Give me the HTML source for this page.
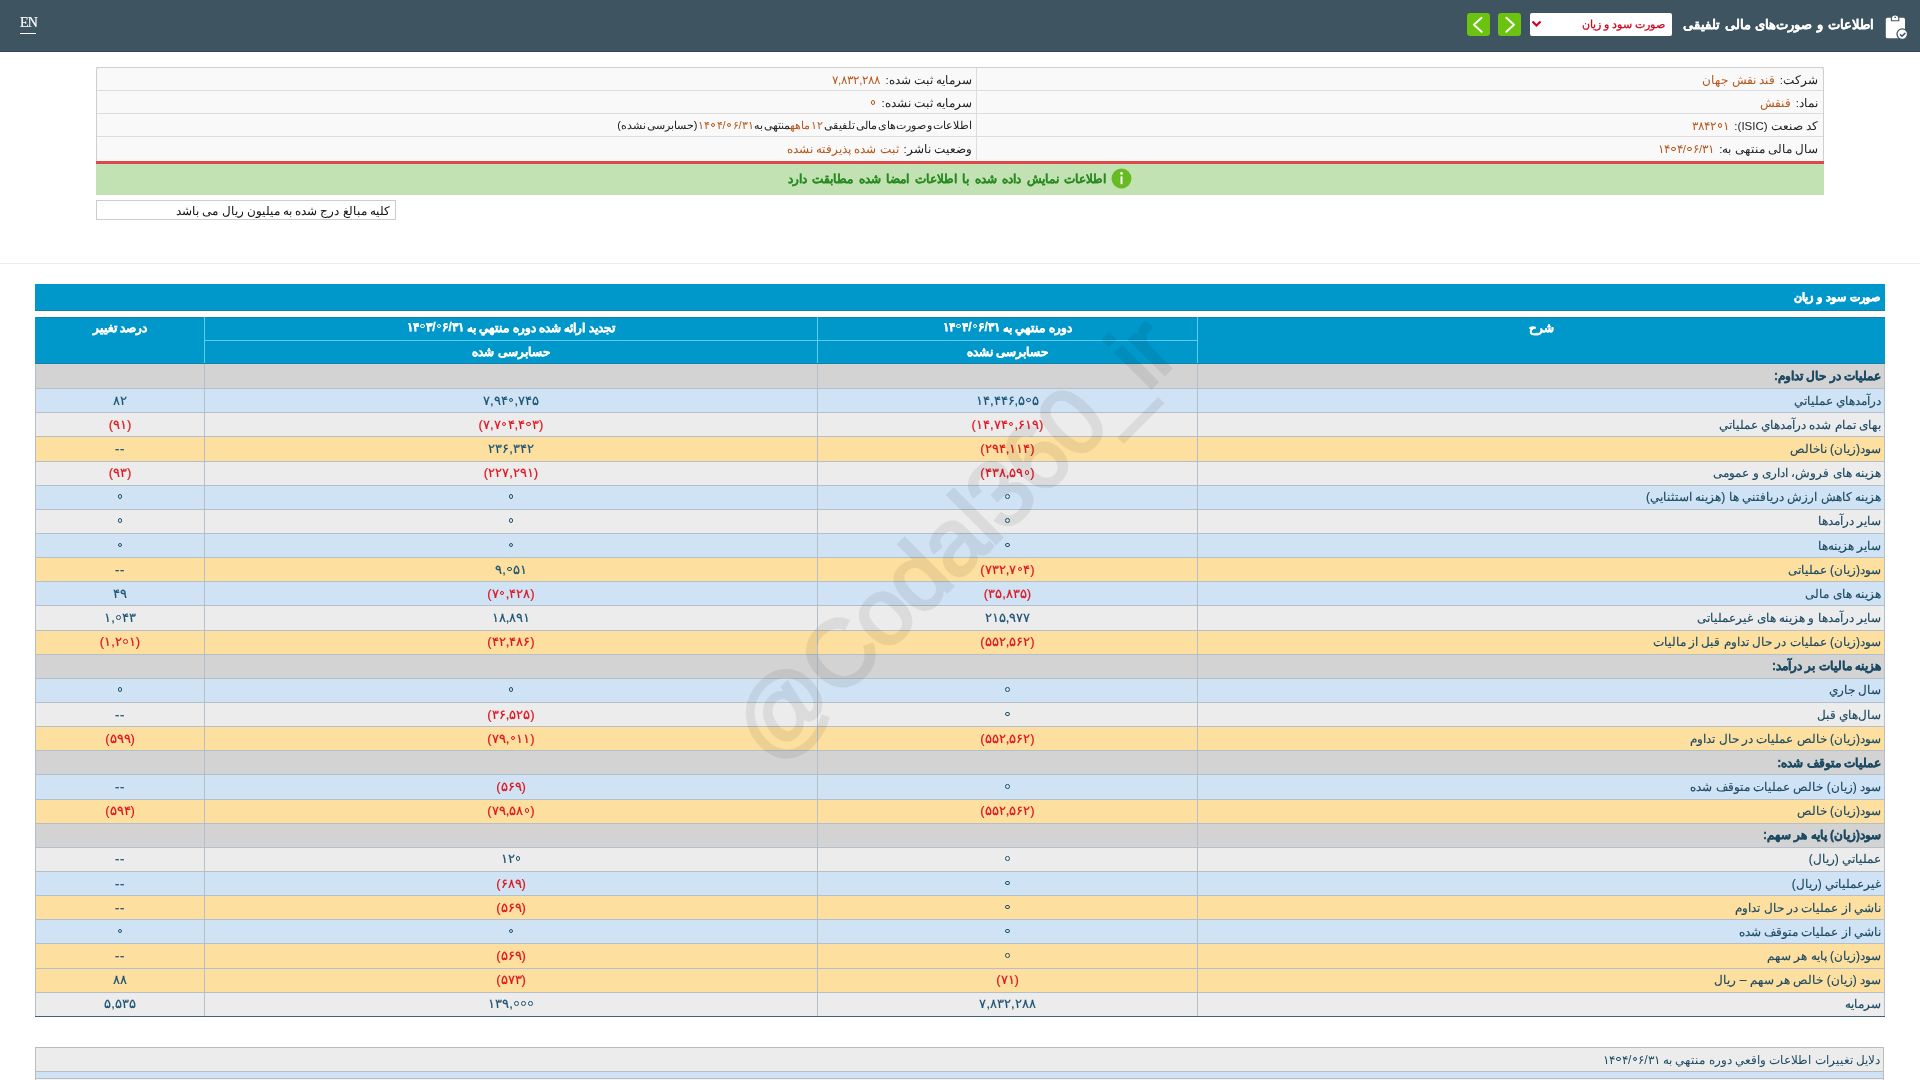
<!DOCTYPE html>
<html lang="fa" dir="rtl">
<head>
<meta charset="utf-8">
<title>Codal</title>
<style>
html,body{margin:0;padding:0;}
body{width:1920px;height:1080px;overflow:hidden;background:#fff;position:relative;will-change:transform;font-family:"Liberation Sans",sans-serif;color:#222;}
.abs{position:absolute;}
/* top bar */
.topbar{left:0;top:0;width:1920px;height:51px;background:#3e5461;border-bottom:1px solid #33454f;}
.en{left:20px;top:15px;font-family:"Liberation Serif",serif;font-size:14px;letter-spacing:-0.8px;color:#fff;line-height:16px;-webkit-text-stroke:0.2px #fff;}
.enline{left:20px;top:33px;width:16px;height:1px;background:#fff;}
.ttl{right:46px;top:14px;font-size:13px;word-spacing:1.2px;font-weight:bold;-webkit-text-stroke:0.15px #fff;color:#fff;line-height:22px;white-space:nowrap;}
.sel{left:1530px;top:13px;width:142px;height:23px;background:#fff;border-radius:2px;}
.seltxt{right:7px;top:3px;font-size:11.1px;color:#d0021b;-webkit-text-stroke:0.25px #d0021b;line-height:17px;white-space:nowrap;}
.btn{top:13px;width:23px;height:23px;background:#6bc20f;border-radius:3px;}
/* info box */
.info{left:96px;top:67px;width:1728px;border-collapse:collapse;background:#f9f9f9;font-size:11.5px;}
.info td{height:21px;padding:1px 4px 0 4px;border-top:1px solid #ddd;text-align:right;vertical-align:middle;white-space:nowrap;}
.info td.r{width:837px;padding-right:6px;border-left:1px solid #ddd;}
.infowrap{left:96px;top:67px;width:1726px;height:93px;border:1px solid #cfcfcf;border-bottom:none;border-radius:3px 3px 0 0;}
.val{color:#b8561c;margin-right:5px;}
.red{left:96px;top:161px;width:1728px;height:3px;background:#e14545;}
.green{left:96px;top:164px;width:1728px;height:31px;background:#c2e2b4;}
.greentxt{left:0;top:4px;width:100%;text-align:center;font-size:12.4px;word-spacing:2px;font-weight:bold;color:#2a8a22;line-height:17px;-webkit-text-stroke:0.1px #2a8a22;}
.note{left:96px;top:200px;width:298px;height:18px;border:1px solid #ccc;font-size:11.7px;color:#111;line-height:19px;overflow:hidden;text-align:right;}
.hr{left:0;top:263px;width:1920px;height:1px;background:#ececec;}
/* section */
.bar{left:35px;top:284px;width:1850px;height:26px;background:#0098ca;border-bottom:1px solid #1a7fa6;}
.bartxt{right:5px;top:5px;font-size:11.1px;font-weight:bold;color:#fff;-webkit-text-stroke:0.6px #fff;word-spacing:1px;line-height:17px;}
.tbl{left:35px;top:317px;width:1849px;border-collapse:collapse;table-layout:fixed;font-size:12px;}
.tbl th{background:#0098ca;color:#fff;font-weight:bold;height:22px;padding:0;border:1px solid #5bcdf2;vertical-align:middle;text-align:center;}
.tbl thead tr:first-child th{border-top:1px solid #1a7fa6;}
.tbl thead th[rowspan], .tbl thead tr:nth-child(2) th{border-bottom:1px solid #1a7fa6;}
.tbl thead th.rt{border-right-color:#0896c6;}
.tbl thead th.lt{border-left-color:#0896c6;}
.tbl th{-webkit-text-stroke:0.3px #fff;}
.tbl thead tr:first-child th:not([rowspan]) span{position:relative;top:-1px;}
.tbl td{height:23.142857px;padding:0 3px;border:1px solid #b4bfc9;border-top:none;color:#1c4a63;white-space:nowrap;}
.tbl td.d{text-align:right;-webkit-text-stroke:0.15px currentColor;}
.tbl td.n{text-align:center;letter-spacing:0.6px;font-size:13px;color:#1b5373;-webkit-text-stroke:0.2px currentColor;padding-bottom:1px;height:22.142857px;}
.tbl th .z, .info .z{vertical-align:1.6px;}
.z{display:inline-block;width:4.6px;height:4.6px;border:1.3px solid currentColor;border-radius:50%;box-sizing:border-box;vertical-align:2.4px;margin:0 1.2px;-webkit-text-stroke:0;}
.tbl td.neg{color:#e0141e;}
.tbl tr.b td{background:#d0e3f4;}
.tbl tr.g td{background:#ececec;}
.tbl tr.y td{background:#fddf9f;}
.tbl tr.sec td{background:#d3d3d3;font-weight:bold;-webkit-text-stroke:0.35px currentColor;}
.tbl tbody tr:first-child td{height:24.142857px;}
.tbl tbody tr:first-child td.n{height:23.142857px;}
.tbl tbody tr:last-child td{border-bottom:1px solid #3e6279;}
.tbl2{left:35px;top:1047px;width:1849px;border-collapse:collapse;font-size:12px;}
.tbl2 td{height:23px;padding:0 3px;border:1px solid #bcbcbc;color:#1c4a63;text-align:right;}
.wm{left:954px;top:540px;width:0;height:0;opacity:0.065;}
.wm span{position:absolute;left:-400px;top:-60px;width:800px;height:120px;text-align:center;font-size:94px;font-weight:normal;color:#000;-webkit-text-stroke:3px #000;transform:rotate(-45deg);transform-origin:400px 60px;white-space:nowrap;font-family:"Liberation Sans",sans-serif;line-height:120px;direction:ltr;letter-spacing:-2px;}
</style>
</head>
<body>
<div class="abs topbar"></div>
<div class="abs en">EN</div>
<div class="abs enline"></div>
<svg class="abs" style="left:1884px;top:14px" width="26" height="27" viewBox="0 0 26 27">
  <rect x="1.8" y="3.8" width="19.2" height="20.5" rx="1.6" fill="#fff"/>
  <path d="M7.4 6.7 V4.6 A3.7 3.7 0 0 1 14.8 4.6 V6.7 Z" fill="#fff" stroke="#3e5461" stroke-width="1.1"/>
  <path d="M10.1 3.9 L11.1 2.1 L12.1 3.9 Z" fill="#3e5461"/>
  <circle cx="18.3" cy="20.1" r="5.3" fill="#fff" stroke="#3e5461" stroke-width="1.3"/>
  <path d="M16.4 20.9 L18 22.2 L20.9 19.4" fill="none" stroke="#3e5461" stroke-width="1.5" stroke-linecap="round" stroke-linejoin="round"/>
</svg>
<div class="abs ttl">اطلاعات و صورت‌های مالی تلفیقی</div>
<div class="abs sel"><div class="abs seltxt">صورت سود و زیان</div>
  <svg class="abs" style="left:1px;top:7px" width="12" height="8" viewBox="0 0 12 8"><path d="M1.5 1.5 L5.5 5.5 L9.5 1.5" fill="none" stroke="#d0021b" stroke-width="2.2"/></svg>
</div>
<div class="abs btn" style="left:1498px"><svg width="23" height="23" viewBox="0 0 23 23"><path d="M8.3 4.8 L16 11.8 L8.3 18.8" fill="none" stroke="#fff" stroke-width="1.9" stroke-linecap="round" stroke-linejoin="round"/></svg></div>
<div class="abs btn" style="left:1467px"><svg width="23" height="23" viewBox="0 0 23 23"><path d="M14.6 4.8 L6.9 11.8 L14.6 18.8" fill="none" stroke="#fff" stroke-width="1.9" stroke-linecap="round" stroke-linejoin="round"/></svg></div>

<table class="abs info">
<tr><td class="r"><span class="lb">شرکت:</span><span class="val">قند نقش جهان</span></td><td><span class="lb">سرمایه ثبت شده:</span><span class="val">۷,۸۳۲,۲۸۸</span></td></tr>
<tr><td class="r"><span class="lb">نماد:</span><span class="val">قنقش</span></td><td><span class="lb">سرمایه ثبت نشده:</span><span class="val"><span dir="ltr"><span class="z"></span></span></span></td></tr>
<tr><td class="r"><span class="lb">کد صنعت (ISIC):</span><span class="val"><span dir="ltr">۳۸۴۲<span class="z"></span>۱</span></span></td><td><span class="lb" style="font-size:11px;word-spacing:-2px">اطلاعات و صورت‌های مالی تلفیقی <span style="color:#b8561c">۱۲ ماهه</span>منتهی به<span style="color:#b8561c"><span dir="ltr">۱۴<span class="z"></span>۴/<span class="z"></span>۶/۳۱</span></span>(حسابرسی نشده)</span></td></tr>
<tr><td class="r" style="height:22px"><span class="lb">سال مالی منتهی به:</span><span class="val"><span dir="ltr">۱۴<span class="z"></span>۴/<span class="z"></span>۶/۳۱</span></span></td><td style="height:22px"><span class="lb">وضعیت ناشر:</span><span class="val">ثبت شده پذیرفته نشده</span></td></tr>
</table>
<div class="abs infowrap"></div>
<div class="abs red"></div>
<div class="abs green"><div class="abs greentxt"><svg style="vertical-align:-6px;margin-left:5px" width="21" height="21" viewBox="0 0 21 21"><circle cx="10.5" cy="10.5" r="10" fill="#66bb22"/><rect x="9.5" y="8.2" width="2" height="8" rx="0.6" fill="#fff"/><circle cx="10.5" cy="5.4" r="1.3" fill="#fff"/></svg><span class="gt">اطلاعات نمایش داده شده با اطلاعات امضا شده مطابقت دارد</span></div></div>
<div class="abs note"><span style="margin-right:5px">کلیه مبالغ درج شده به میلیون ریال می باشد</span></div>
<div class="abs hr"></div>

<div class="abs bar"><div class="abs bartxt">صورت سود و زیان</div></div>
<table class="abs tbl">
<colgroup><col style="width:687px"><col style="width:380px"><col style="width:613px"><col style="width:169px"></colgroup>
<thead>
<tr><th class="rt" rowspan="2" style="vertical-align:top;padding-top:3px"><span>شرح</span></th><th><span>دوره منتهي به <span dir="ltr">۱۴<span class="z"></span>۴/<span class="z"></span>۶/۳۱</span></span></th><th><span>تجديد ارائه شده دوره منتهي به <span dir="ltr">۱۴<span class="z"></span>۳/<span class="z"></span>۶/۳۱</span></span></th><th class="lt" rowspan="2" style="vertical-align:top;padding-top:3px"><span>درصد تغيير</span></th></tr>
<tr><th><span>حسابرسی نشده</span></th><th><span>حسابرسی شده</span></th></tr>
</thead>
<tbody>
<tr class="sec"><td class="d">عمليات در حال تداوم:</td><td class="n "></td><td class="n "></td><td class="n "></td></tr>
<tr class="b"><td class="d">درآمدهاي عملياتي</td><td class="n "><span dir="ltr">۱۴,۴۴۶,۵<span class="z"></span>۵</span></td><td class="n "><span dir="ltr">۷,۹۴<span class="z"></span>,۷۴۵</span></td><td class="n ">۸۲</td></tr>
<tr class="g"><td class="d">بهای تمام شده درآمدهاي عملياتي</td><td class="n neg">(<span dir="ltr">۱۴,۷۴<span class="z"></span>,۶۱۹</span>)</td><td class="n neg">(<span dir="ltr">۷,۷<span class="z"></span>۴,۴<span class="z"></span>۳</span>)</td><td class="n neg">(۹۱)</td></tr>
<tr class="y"><td class="d">سود(زيان) ناخالص</td><td class="n neg">(۲۹۴,۱۱۴)</td><td class="n ">۲۳۶,۳۴۲</td><td class="n ">--</td></tr>
<tr class="g"><td class="d">هزينه های فروش، اداری و عمومی</td><td class="n neg">(<span dir="ltr">۴۳۸,۵۹<span class="z"></span></span>)</td><td class="n neg">(۲۲۷,۲۹۱)</td><td class="n neg">(۹۳)</td></tr>
<tr class="b"><td class="d">هزينه کاهش ارزش دريافتني ها (هزينه استثنايي)</td><td class="n "><span dir="ltr"><span class="z"></span></span></td><td class="n "><span dir="ltr"><span class="z"></span></span></td><td class="n "><span dir="ltr"><span class="z"></span></span></td></tr>
<tr class="g"><td class="d">ساير درآمدها</td><td class="n "><span dir="ltr"><span class="z"></span></span></td><td class="n "><span dir="ltr"><span class="z"></span></span></td><td class="n "><span dir="ltr"><span class="z"></span></span></td></tr>
<tr class="b"><td class="d">ساير هزينه‌ها</td><td class="n "><span dir="ltr"><span class="z"></span></span></td><td class="n "><span dir="ltr"><span class="z"></span></span></td><td class="n "><span dir="ltr"><span class="z"></span></span></td></tr>
<tr class="y"><td class="d">سود(زيان) عملياتی</td><td class="n neg">(<span dir="ltr">۷۳۲,۷<span class="z"></span>۴</span>)</td><td class="n "><span dir="ltr">۹,<span class="z"></span>۵۱</span></td><td class="n ">--</td></tr>
<tr class="b"><td class="d">هزينه های مالی</td><td class="n neg">(۳۵,۸۳۵)</td><td class="n neg">(<span dir="ltr">۷<span class="z"></span>,۴۲۸</span>)</td><td class="n ">۴۹</td></tr>
<tr class="g"><td class="d">ساير درآمدها و هزينه های غيرعملياتی</td><td class="n ">۲۱۵,۹۷۷</td><td class="n ">۱۸,۸۹۱</td><td class="n "><span dir="ltr">۱,<span class="z"></span>۴۳</span></td></tr>
<tr class="y"><td class="d">سود(زيان) عمليات در حال تداوم قبل از ماليات</td><td class="n neg">(۵۵۲,۵۶۲)</td><td class="n neg">(۴۲,۴۸۶)</td><td class="n neg">(<span dir="ltr">۱,۲<span class="z"></span>۱</span>)</td></tr>
<tr class="sec"><td class="d">هزينه ماليات بر درآمد:</td><td class="n "></td><td class="n "></td><td class="n "></td></tr>
<tr class="b"><td class="d">سال جاري</td><td class="n "><span dir="ltr"><span class="z"></span></span></td><td class="n "><span dir="ltr"><span class="z"></span></span></td><td class="n "><span dir="ltr"><span class="z"></span></span></td></tr>
<tr class="g"><td class="d">سال‌هاي قبل</td><td class="n "><span dir="ltr"><span class="z"></span></span></td><td class="n neg">(۳۶,۵۲۵)</td><td class="n ">--</td></tr>
<tr class="y"><td class="d">سود(زيان) خالص عمليات در حال تداوم</td><td class="n neg">(۵۵۲,۵۶۲)</td><td class="n neg">(<span dir="ltr">۷۹,<span class="z"></span>۱۱</span>)</td><td class="n neg">(۵۹۹)</td></tr>
<tr class="sec"><td class="d">عمليات متوقف شده:</td><td class="n "></td><td class="n "></td><td class="n "></td></tr>
<tr class="b"><td class="d">سود (زيان) خالص عمليات متوقف شده</td><td class="n "><span dir="ltr"><span class="z"></span></span></td><td class="n neg">(۵۶۹)</td><td class="n ">--</td></tr>
<tr class="y"><td class="d">سود(زيان) خالص</td><td class="n neg">(۵۵۲,۵۶۲)</td><td class="n neg">(<span dir="ltr">۷۹,۵۸<span class="z"></span></span>)</td><td class="n neg">(۵۹۴)</td></tr>
<tr class="sec"><td class="d">سود(زيان) پايه هر سهم:</td><td class="n "></td><td class="n "></td><td class="n "></td></tr>
<tr class="g"><td class="d">عملياتي (ريال)</td><td class="n "><span dir="ltr"><span class="z"></span></span></td><td class="n "><span dir="ltr">۱۲<span class="z"></span></span></td><td class="n ">--</td></tr>
<tr class="b"><td class="d">غيرعملياتي (ريال)</td><td class="n "><span dir="ltr"><span class="z"></span></span></td><td class="n neg">(۶۸۹)</td><td class="n ">--</td></tr>
<tr class="y"><td class="d">ناشي از عمليات در حال تداوم</td><td class="n "><span dir="ltr"><span class="z"></span></span></td><td class="n neg">(۵۶۹)</td><td class="n ">--</td></tr>
<tr class="b"><td class="d">ناشي از عمليات متوقف شده</td><td class="n "><span dir="ltr"><span class="z"></span></span></td><td class="n "><span dir="ltr"><span class="z"></span></span></td><td class="n "><span dir="ltr"><span class="z"></span></span></td></tr>
<tr class="y"><td class="d">سود(زيان) پايه هر سهم</td><td class="n "><span dir="ltr"><span class="z"></span></span></td><td class="n neg">(۵۶۹)</td><td class="n ">--</td></tr>
<tr class="y"><td class="d">سود (زيان) خالص هر سهم – ريال</td><td class="n neg">(۷۱)</td><td class="n neg">(۵۷۳)</td><td class="n ">۸۸</td></tr>
<tr class="g"><td class="d">سرمايه</td><td class="n ">۷,۸۳۲,۲۸۸</td><td class="n "><span dir="ltr">۱۳۹,<span class="z"></span><span class="z"></span><span class="z"></span></span></td><td class="n ">۵,۵۳۵</td></tr>
</tbody>
</table>
<table class="abs tbl2">
<tr><td style="background:#ececec">دلايل تغييرات اطلاعات واقعي دوره منتهي به <span dir="ltr">۱۴<span class="z"></span>۴/<span class="z"></span>۶/۳۱</span></td></tr>
<tr><td style="background:#d0e3f4;height:6px;font-size:1px;line-height:1px"></td></tr>
<tr><td style="background:#f2f4f6">&nbsp;</td></tr>
</table>
<div class="abs wm" dir="ltr"><span>@Codal360_ir</span></div>
</body>
</html>
